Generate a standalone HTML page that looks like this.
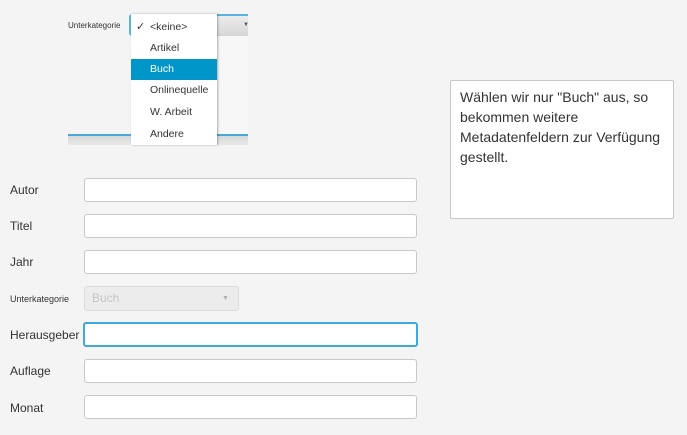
<!DOCTYPE html>
<html><head><style>
body{margin:0;width:687px;height:435px;background:#f4f4f4;font-family:"Liberation Sans","DejaVu Sans",sans-serif;position:relative;overflow:hidden;color:#333}
.a{position:absolute}
.lbl{position:absolute;left:10px;font-size:12px;color:#333}
.inp{position:absolute;left:84px;width:331px;height:22px;background:#fff;border:1px solid #c8c8c8;border-radius:3px}
.it{position:absolute;left:131px;width:86px;height:21px;font-size:10.5px;line-height:21px;padding-left:19px;box-sizing:border-box;color:#333}
</style></head><body>
<div class="a" style="left:68px;top:0;width:180px;height:145px;background:#f4f4f4"></div>
<div class="a" style="left:218px;top:36px;width:30px;height:99px;background:#f7f7f7"></div>
<div class="a" style="left:68px;top:134px;width:180px;height:2px;background:#4aa8d8"></div>
<div class="a" style="left:68px;top:136px;width:180px;height:9px;background:linear-gradient(#d8d8d8,#e8e8e8)"></div>
<div class="a" style="left:68px;top:21px;font-size:8px;color:#333">Unterkategorie</div>
<div class="a" style="left:129px;top:14px;width:119px;height:22px;background:linear-gradient(#ececec,#d6d6d6);border-top:2px solid #5ab4e0;border-left:2px solid #5ab4e0;box-sizing:border-box;border-radius:3px 0 0 3px"></div>
<div class="a" style="left:243px;top:22px;font-size:6px;color:#555">▼</div>
<div class="a" style="left:131px;top:14px;width:86px;height:131px;background:#fff;box-shadow:1px 0 2px rgba(0,0,0,.3)"></div>
<div class="it" style="top:17px"><span style="position:absolute;left:5px;font-size:11px">✓</span>&lt;keine&gt;</div>
<div class="it" style="top:38px">Artikel</div>
<div class="it" style="top:59px;background:#0096c9;color:#fff">Buch</div>
<div class="it" style="top:80px">Onlinequelle</div>
<div class="it" style="top:102px">W. Arbeit</div>
<div class="it" style="top:124px">Andere</div>
<div class="a" style="left:450px;top:80px;width:222px;height:137px;background:#fff;border:1px solid #c8c8c8;border-radius:2px"></div>
<div class="a" style="left:460px;top:87px;width:210px;font-size:14px;line-height:20px;color:#333">Wählen wir nur "Buch" aus, so bekommen weitere Metadatenfeldern zur Verfügung gestellt.</div>
<div class="lbl" style="top:183px">Autor</div><div class="inp" style="top:178px"></div>
<div class="lbl" style="top:219px">Titel</div><div class="inp" style="top:214px"></div>
<div class="lbl" style="top:255px">Jahr</div><div class="inp" style="top:250px"></div>
<div class="lbl" style="top:294px;font-size:9px">Unterkategorie</div>
<div class="a" style="left:84px;top:286px;width:153px;height:23px;background:#ececec;border:1px solid #dcdcdc;border-radius:3px"></div>
<div class="a" style="left:92px;top:291px;font-size:12px;color:#c4c4c4">Buch</div>
<div class="a" style="left:222px;top:295px;font-size:7px;color:#b0b0b0">▼</div>
<div class="lbl" style="top:328px">Herausgeber</div><div class="inp" style="top:322px;border:2px solid #3fa9dc;left:83px;width:331px;height:21px"></div>
<div class="lbl" style="top:364px">Auflage</div><div class="inp" style="top:359px"></div>
<div class="lbl" style="top:401px">Monat</div><div class="inp" style="top:395px"></div>
</body></html>
